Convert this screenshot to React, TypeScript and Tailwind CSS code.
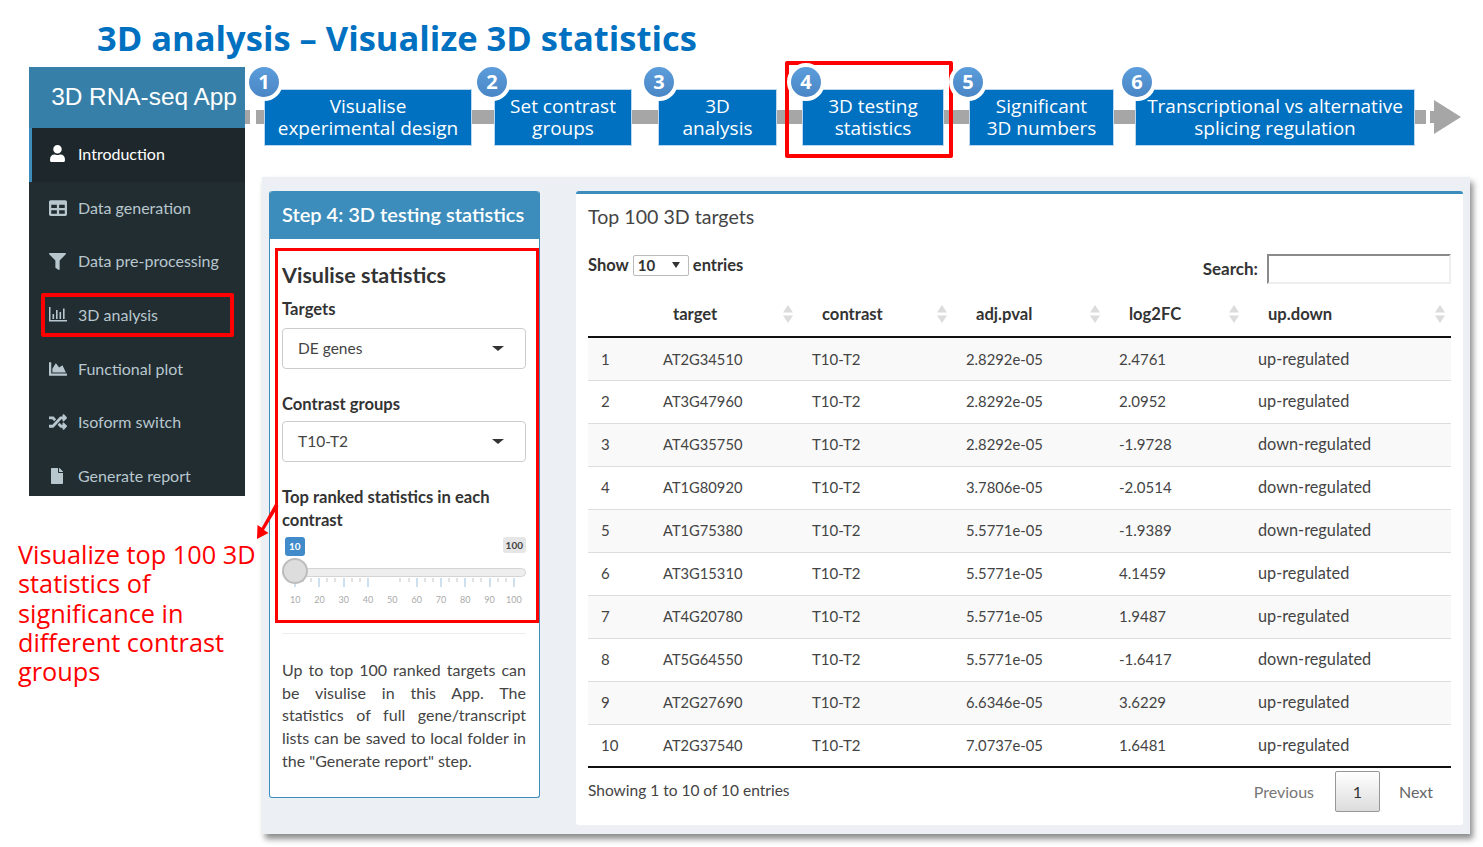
import { FaChartArea, FaFile, FaFilter, FaRandom, FaTable, FaUser } from 'react-icons/fa';
import type { ReactNode } from 'react';

const BODY = "font-['Lato','Noto_Sans',sans-serif]";
const SLIDE = "font-['Open_Sans','Noto_Sans',sans-serif]";

function BarsIcon() {
  return (
    <svg width="18" height="15" viewBox="0 0 18 15" fill="currentColor">
      <path d="M0 0h1.5v13H18v1.5H0z" />
      <path d="M3.5 7h1.6v5H3.5zM7 3h1.6v9H7zM10.500 5h1.600v7h-1.600zM14 1.500h1.600V12H14z" />
    </svg>
  );
}

const menu: { label: string; icon: ReactNode; active?: boolean }[] = [
  { label: 'Introduction', icon: <FaUser size={17} />, active: true },
  { label: 'Data generation', icon: <FaTable size={18} /> },
  { label: 'Data pre-processing', icon: <FaFilter size={17} /> },
  { label: '3D analysis', icon: <BarsIcon /> },
  { label: 'Functional plot', icon: <FaChartArea size={18} /> },
  { label: 'Isoform switch', icon: <FaRandom size={18} /> },
  { label: 'Generate report', icon: <FaFile size={16} /> },
];

const steps = [
  { n: 1, lines: ['Visualise', 'experimental design'], box: 'w-[208px] mr-[22px]', badge: 'left-[-20px]' },
  { n: 2, lines: ['Set contrast', 'groups'], box: 'w-[138px] mr-[26px]', badge: 'left-[-22px]' },
  { n: 3, lines: ['3D', 'analysis'], box: 'w-[119px] mr-[25px]', badge: 'left-[-19px]' },
  { n: 4, lines: ['3D testing', 'statistics'], box: 'w-[142px] mr-[25px]', badge: 'left-[-16px]', selected: true },
  { n: 5, lines: ['Significant', '3D numbers'], box: 'w-[145px] mr-[21px]', badge: 'left-[-21px]' },
  { n: 6, lines: ['Transcriptional vs alternative', 'splicing regulation'], box: 'w-[280px]', badge: 'left-[-18px]' },
];

const rows = [
  ['1', 'AT2G34510', 'T10-T2', '2.8292e-05', '2.4761', 'up-regulated'],
  ['2', 'AT3G47960', 'T10-T2', '2.8292e-05', '2.0952', 'up-regulated'],
  ['3', 'AT4G35750', 'T10-T2', '2.8292e-05', '-1.9728', 'down-regulated'],
  ['4', 'AT1G80920', 'T10-T2', '3.7806e-05', '-2.0514', 'down-regulated'],
  ['5', 'AT1G75380', 'T10-T2', '5.5771e-05', '-1.9389', 'down-regulated'],
  ['6', 'AT3G15310', 'T10-T2', '5.5771e-05', '4.1459', 'up-regulated'],
  ['7', 'AT4G20780', 'T10-T2', '5.5771e-05', '1.9487', 'up-regulated'],
  ['8', 'AT5G64550', 'T10-T2', '5.5771e-05', '-1.6417', 'down-regulated'],
  ['9', 'AT2G27690', 'T10-T2', '6.6346e-05', '3.6229', 'up-regulated'],
  ['10', 'AT2G37540', 'T10-T2', '7.0737e-05', '1.6481', 'up-regulated'],
];

const columns = ['', 'target', 'contrast', 'adj.pval', 'log2FC', 'up.down'];
const cellSizes = ['text-[15px]', 'text-[14.700px]', 'text-[15px]', 'text-[14.800px]', 'text-[15px]', 'text-[16.300px]'];

function SortArrows() {
  return (
    <svg width="10" height="18" viewBox="0 0 10 18" fill="#dcdcdc" className="absolute right-[6px] top-[14px]">
      <path d="M5 0l5 7.500H0zM5 18l5-7.500H0z" />
    </svg>
  );
}

function Select({ value }: { value: string }) {
  return (
    <div className="flex h-[41px] w-[244px] items-center justify-between rounded-[4px] border border-[#cccccc] bg-white pl-[15px] pr-[21px] text-[15.500px] text-[#444444]">
      <span>{value}</span>
      <span className="h-0 w-0 border-x-[6px] border-t-[5px] border-x-transparent border-t-[#333333]" />
    </div>
  );
}

function SliderTicks() {
  const minors = [303, 311, 327, 335, 352, 360, 400, 409, 425, 433, 449, 457, 473, 481, 498, 506].map((x) => x - 282);
  const majors = [295, 319, 344, 368, 417, 441, 465, 490, 514].map((x) => x - 282);
  return (
    <svg width="244" height="12" viewBox="0 0 244 12" className="block">
      {minors.map((x) => (
        <line key={x} x1={x} x2={x} y1="1" y2="5" stroke="#c4c4c4" />
      ))}
      {majors.map((x) => (
        <line key={x} x1={x} x2={x} y1="1" y2="10" stroke="#9dbfdc" />
      ))}
    </svg>
  );
}

function Slider() {
  const labels = ['10', '20', '30', '40', '50', '60', '70', '80', '90', '100'];
  return (
    <div className="w-[244px]">
      <div className="flex h-[19px] items-start justify-between">
        <span className="ml-[3px] rounded-[3px] bg-[#428bca] px-[4px] text-[10px] font-bold leading-[19px] text-white">10</span>
        <span className="rounded-[3px] bg-[#e6e6e6] px-[3px] text-[10px] font-bold leading-[16px] text-[#444444]">100</span>
      </div>
      <div className="relative mt-[12px] h-[9px] rounded-full border border-[#d4d4d4] bg-[#eeeeee]">
        <div className="absolute left-[-1px] top-[-11px] h-[26px] w-[26px] rounded-full border-2 border-[#bdbdbd] bg-[#dddddd]" />
      </div>
      <SliderTicks />
      <div className="ml-[1px] mt-[4px] flex text-[9px] leading-[14px] text-[#aaaaaa]">
        {labels.map((l) => (
          <span key={l} className="w-[24.300px] text-center">{l}</span>
        ))}
      </div>
    </div>
  );
}

function Sidebar() {
  return (
    <div className={`relative h-[429px] w-[216px] overflow-hidden bg-[#222d32] ${BODY}`}>
      <div className="flex h-[61px] items-center justify-center bg-[#367fa9] pb-[1px] pl-[14px] font-['Liberation_Sans',sans-serif] text-[24.400px] text-white">
        3D RNA-seq App
      </div>
      {menu.map((item) =>
        item.active ? (
          <div key={item.label} className="flex h-[53.700px] items-center border-l-[3px] border-[#3c8dbc] bg-[#1e282c] pb-[2px] pl-[17px] text-[16px] text-white">
            <span className="flex w-[29px] items-center">{item.icon}</span>
            {item.label}
          </div>
        ) : (
          <div key={item.label} className="flex h-[53.700px] items-center pb-[2px] pl-[20px] text-[16px] text-[#b8c7ce]">
            <span className="flex w-[29px] items-center">{item.icon}</span>
            {item.label}
          </div>
        ),
      )}
      <div className="absolute left-[12px] top-[226px] h-[44px] w-[193px] rounded-[2px] border-[4px] border-[#ff0000]" />
    </div>
  );
}

function Stepper() {
  return (
    <div className={`relative h-[110px] pl-[19px] pt-[22px] ${SLIDE}`}>
      <div className="absolute left-0 top-[43px] flex h-[14px] gap-[6px]">
        <div className="w-[5px] bg-[#a6a6a6]" />
        <div className="w-[8px] bg-[#a6a6a6]" />
      </div>
      <div className="absolute left-[19px] top-[43px] h-[14px] w-[1162px] bg-[#a6a6a6]" />
      <svg width="31" height="34" viewBox="0 0 31 34" fill="#a6a6a6" className="absolute left-[1185px] top-[33px]">
        <path d="M4 0l27 17L4 34V23H0V11h4z" />
      </svg>
      <div className="relative flex">
        {steps.map((s) => (
          <div key={s.n} className={`relative flex h-[57px] flex-col items-center justify-center border border-[#bcd7ef] bg-[#0070c0] pb-[2px] text-[19px] leading-[22px] text-white ${s.box}`}>
            {s.lines.map((l) => (
              <span key={l} className="whitespace-nowrap">{l}</span>
            ))}
            {s.selected && (
              <div className="absolute bottom-[-13px] left-[-18px] right-[-10px] top-[-29px] rounded-[2px] border-[4px] border-[#ff0000]" />
            )}
            <div className={`absolute top-[-27px] flex h-[38px] w-[38px] items-center justify-center rounded-full border-[4px] border-white bg-gradient-to-b from-[#5c9ddb] to-[#4a86c5] text-[20px] font-bold text-white ${s.badge}`}>
              {s.n}
            </div>
          </div>
        ))}
      </div>
    </div>
  );
}

function LeftBox() {
  return (
    <div className="flex h-[607px] w-[271px] flex-col rounded-[3px] border-[1.500px] border-t-0 border-[#3c8dbc] bg-white text-[#333333]">
      <div className="flex h-[48px] shrink-0 items-center rounded-t-[3px] bg-[#3c8dbc] pb-[3px] pl-[12px] text-[20px] font-semibold text-white">
        Step 4: 3D testing statistics
      </div>
      <div className="ml-[5px] mt-[9px] h-[375px] w-[264px] shrink-0 border-[3px] border-[#ff0000] pl-[4px]">
        <h3 className="mt-[11px] text-[21.500px] font-bold leading-[26px]">Visulise statistics</h3>
        <p className="mb-[8px] mt-[10px] text-[16.600px] font-bold leading-[22px]">Targets</p>
        <Select value="DE genes" />
        <p className="mb-[6px] mt-[24px] text-[16.600px] font-bold leading-[22px]">Contrast groups</p>
        <Select value="T10-T2" />
        <p className="mb-[5px] mt-[24px] text-[16.600px] font-bold leading-[23px]">
          Top ranked statistics in each
          <br />
          contrast
        </p>
        <Slider />
      </div>
      <div className="ml-[12px] mt-[10px] w-[244px] border-t border-[#eeeeee]" />
      <p className="ml-[12px] mt-[25px] w-[244px] text-justify text-[16px] leading-[22.700px] text-[#444444]">
        Up to top 100 ranked targets can be visulise in this App. The statistics of full gene/transcript lists can be saved to local folder in the "Generate report" step.
      </p>
    </div>
  );
}

function RightBox() {
  return (
    <div className="ml-[36px] h-[634px] w-[887px] rounded-[3px] border-t-[3px] border-[#3c8dbc] bg-white pl-[12px] text-[#333333]">
      <h3 className="mt-[10px] text-[19.600px] leading-[26px] text-[#444444]">Top 100 3D targets</h3>
      <div className="mt-[21px] flex h-[34px] w-[863px] justify-between">
        <div className="flex h-[28px] items-center gap-[4px] text-[16.500px] font-bold">
          Show
          <div className="flex h-[21px] w-[56px] items-center justify-between rounded-[2px] border border-[#bbbbbb] pl-[4px] pr-[8px] text-[15px]">
            10
            <span className="h-0 w-0 border-x-[4px] border-t-[6px] border-x-transparent border-t-[#333333]" />
          </div>
          entries
        </div>
        <div className="flex items-center gap-[9px] pt-[1px] text-[17px] font-bold">
          Search:
          <div className="h-[30px] w-[184px] border-2 border-b-[#eeeeee] border-l-[#8a8a8a] border-r-[#eeeeee] border-t-[#8a8a8a]" />
        </div>
      </div>
      <table className="mt-[6px] w-[863px] table-fixed border-collapse text-[#444444]">
        <colgroup>
          <col className="w-[62px]" />
          <col className="w-[149px]" />
          <col className="w-[154px]" />
          <col className="w-[153px]" />
          <col className="w-[139px]" />
          <col className="w-[206px]" />
        </colgroup>
        <thead>
          <tr className="h-[46px] border-b-2 border-[#111111]">
            {columns.map((c) => (
              <th key={c} className="relative pl-[23px] pr-0 pt-[2px] text-left text-[16.600px] font-bold text-[#333333]">
                {c}
                {c && <SortArrows />}
              </th>
            ))}
          </tr>
        </thead>
        <tbody>
          {rows.map((r, i) => (
            <tr key={r[0]} className={`${i === 9 ? 'h-[42px]' : 'h-[43px]'} ${i > 0 ? 'border-t border-[#dddddd]' : ''} ${i % 2 === 0 ? 'bg-[#f9f9f9]' : 'bg-white'}`}>
              {r.map((v, j) => (
                <td key={j} className={`pl-[13px] ${cellSizes[j]}`}>{v}</td>
              ))}
            </tr>
          ))}
        </tbody>
      </table>
      <div className="flex w-[863px] items-center justify-between border-t-2 border-[#111111] pt-[3px] text-[16px] text-[#444444]">
        <span className="-mt-[2px] text-[15.500px]">Showing 1 to 10 of 10 entries</span>
        <div className="flex items-center pr-[18px]">
          <span className="mr-[21px] text-[#777777]">Previous</span>
          <span className="flex h-[41px] w-[45px] items-center justify-center rounded-[2px] border border-[#979797] bg-gradient-to-b from-white to-[#dcdcdc] text-[#333333]">1</span>
          <span className="ml-[19px] text-[#666666]">Next</span>
        </div>
      </div>
    </div>
  );
}

export default function App() {
  return (
    <div className="h-[847px] w-[1483px] overflow-hidden bg-white">
      <h1 className={`flex h-[67px] items-center pl-[97px] pt-[8px] text-[34.500px] font-bold text-[#0070c0] ${SLIDE}`}>
        3D analysis – Visualize 3D statistics
      </h1>
      <div className="flex">
        <div className="relative ml-[29px] w-[216px] shrink-0">
          <Sidebar />
          <svg width="24" height="36" viewBox="0 0 24 36" className="absolute left-[226px] top-[437px]" fill="#ff0000">
            <path d="M20 0l3.500 2L9 26l4.500 3L2 35l.5-14 4.200 2.800z" />
          </svg>
          <p className={`ml-[-11px] mt-[44px] w-[262px] text-[25.300px] leading-[29.300px] text-[#ff0000] ${SLIDE}`}>
            Visualize top 100 3D statistics of
            <br />
            significance in
            <br />
            different contrast
            <br />
            groups
          </p>
        </div>
        <div className="w-[1238px] shrink-0">
          <Stepper />
          <div className={`ml-[17px] flex h-[657px] w-[1208px] items-start bg-[#ecf0f5] pl-[7px] pt-[14px] shadow-[3px_5px_6px_rgba(0,0,0,0.45)] ${BODY}`}>
            <LeftBox />
            <RightBox />
          </div>
        </div>
      </div>
    </div>
  );
}
